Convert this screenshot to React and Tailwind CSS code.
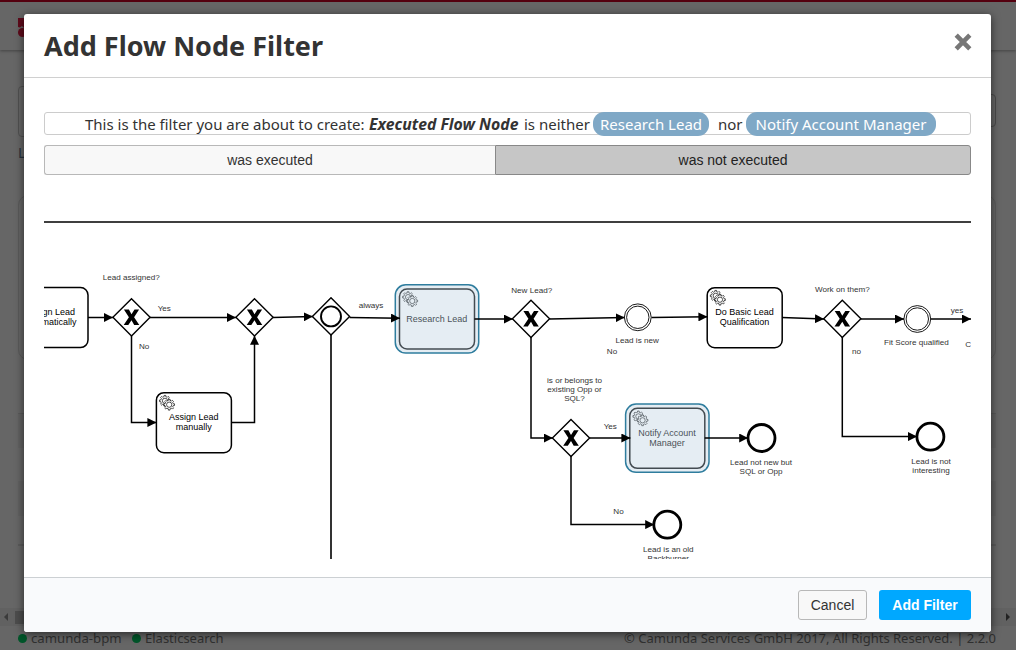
import React from "react";

const GEAR =
  "m 12,18 v -1.71335 c 0.352326,-0.0705 0.703932,-0.17838 1.047628,-0.32133 0.344416,-0.14465 0.665822,-0.32133 0.966377,-0.52145 l 1.19431,1.18005 1.567487,-1.57688 -1.195028,-1.18014 c 0.403376,-0.61394 0.683079,-1.29908 0.825447,-2.01824 l 1.622133,-0.01 v -2.2196 l -1.636514,0.01 c -0.07333,-0.35153 -0.178319,-0.70024 -0.323564,-1.04372 -0.145244,-0.34406 -0.321407,-0.6644 -0.522735,-0.96217 l 1.131035,-1.13631 -1.583305,-1.56293 -1.129598,1.13589 c -0.614052,-0.40108 -1.302883,-0.68093 -2.022633,-0.82247 l 0.0093,-1.61852 h -2.241173 l 0.0042,1.63124 c -0.353763,0.0736 -0.705369,0.17977 -1.049785,0.32371 -0.344415,0.14437 -0.665102,0.32092 -0.9635006,0.52006 l -1.1698628,-1.15823 -1.5667691,1.5792 1.1684265,1.15669 c -0.4026573,0.61283 -0.68308,1.29797 -0.8247287,2.01713 l -1.6588041,0.003 v 2.22174 l 1.6724648,-0.006 c 0.073327,0.35077 0.1797598,0.70243 0.3242851,1.04472 0.1452428,0.34448 0.3214064,0.6644 0.5227339,0.96066 l -1.1993431,1.19723 1.5840256,1.56011 1.1964668,-1.19348 c 0.6140517,0.40346 1.3028827,0.68232 2.0233517,0.82331 l 7.19e-4,1.69892 h 2.226848 z";

function Gears({ x, y }) {
  return (
    <g transform={`translate(${x} ${y}) scale(0.75)`} fill="#fff" stroke="#000" strokeWidth="0.9">
      <path d={GEAR} />
      <circle cx="10.9" cy="10.8" r="3.5" />
      <g transform="translate(5.6 5.2)">
        <path d={GEAR} />
        <circle cx="10.9" cy="10.8" r="3.5" />
      </g>
    </g>
  );
}

function Task({ x, y, lines, selected, textY }) {
  return (
    <g>
      <g opacity={selected ? 0.75 : 1}>
        <rect x={x} y={y} width="75" height="60" rx="7.5" fill="#fff" stroke="#000" strokeWidth="1.5" />
        <Gears x={x + 0.4} y={y} />
        {lines.map((line, i) => (
          <text key={line} x={x + 37.3} y={textY + i * 10} textAnchor="middle" fontSize="9" fill="#000">
            {line}
          </text>
        ))}
      </g>
      {selected && (
        <rect x={x - 4.2} y={y - 4.2} width="83.4" height="68.2" rx="10.5" fill="#5b8fb5" fillOpacity="0.16" stroke="#2f7d9e" strokeWidth="1.5" />
      )}
    </g>
  );
}

function Gateway({ x, y, event }) {
  return (
    <g transform={`translate(${x} ${y})`}>
      <path d="M0-18.6 18.6 0 0 18.6-18.6 0Z" fill="#fff" stroke="#000" strokeWidth="1.4" />
      {event ? (
        <circle r="10" fill="none" stroke="#000" strokeWidth="1.9" />
      ) : (
        <path d="M-7.6-7.7h5L0-3 3-7.7H7.6L2.6 0 7.8 7.7H2.7L0 2.9-3.2 7.7H-7.8L-2.6 0Z" fill="#000" />
      )}
    </g>
  );
}

function IntermediateEvent({ x, y }) {
  return (
    <g fill="#fff" stroke="#000" strokeWidth="0.9">
      <circle cx={x} cy={y} r="13.4" />
      <circle cx={x} cy={y} r="11.2" />
    </g>
  );
}

function EndEvent({ x, y }) {
  return <circle cx={x} cy={y} r="13.5" fill="#fff" stroke="#000" strokeWidth="2.8" />;
}

const FLOWS = [
  "M88 317.5H112.9",
  "M150 317.5H235.9",
  "M131.5 336V422.5H156.4",
  "M231.5 422.5H254.5V335.8",
  "M273 317.5 312.8 316.6",
  "M349.6 317.4 400 318.2",
  "M474.5 319H512.8",
  "M549.5 319 624.6 317.6",
  "M651.5 317.4 707.4 316.8",
  "M782 317.6 824 319",
  "M861 319H904",
  "M930.8 319H971",
  "M842.3 337V436.6H917",
  "M531 337V438H552.8",
  "M589.6 438H630.4",
  "M704.7 438H748.2",
  "M571 456V524.6H654.2",
];

const LABELS = [
  [131.3, 279.6, "Lead assigned?"],
  [164.3, 311.2, "Yes"],
  [144.2, 349, "No"],
  [371, 308, "always"],
  [531.7, 293, "New Lead?"],
  [637.2, 343, "Lead is new"],
  [612, 354, "No"],
  [574.5, 383, "is or belongs to"],
  [574.5, 392, "existing Opp or"],
  [574.5, 401, "SQL?"],
  [610.3, 429, "Yes"],
  [761, 465, "Lead not new but"],
  [761, 474, "SQL or Opp"],
  [618.5, 514, "No"],
  [668.3, 552, "Lead is an old"],
  [668.3, 561, "Backburner"],
  [842.3, 292, "Work on them?"],
  [856.5, 354, "no"],
  [957, 313.4, "yes"],
  [916.5, 345.3, "Fit Score qualified"],
  [968.3, 347, "C"],
  [931, 464, "Lead is not"],
  [931, 473, "interesting"],
];

function Diagram() {
  return (
    <svg className="block h-[377px] w-[927px] font-['Liberation_Sans',sans-serif]" viewBox="44 182 927 377">
      <defs>
        <marker id="arrow" viewBox="0 0 9 9" refX="9" refY="4.5" markerWidth="9" markerHeight="9" markerUnits="userSpaceOnUse" orient="auto">
          <path d="M0 0 9 4.5 0 9Z" fill="#000" />
        </marker>
      </defs>
      <path d="M44 222H971" stroke="#3f3f3f" strokeWidth="2" />
      <path d="M331 335V559" stroke="#333" strokeWidth="2" />
      <Task x={13} y={287.6} lines={["Assign Lead", "automatically"]} textY={315} />
      <Gateway x={131.5} y={317.3} />
      <Gateway x={254.5} y={317.3} />
      <Gateway x={331} y={316.4} event />
      <Task x={156.4} y={392.7} lines={["Assign Lead", "manually"]} textY={420} />
      <Task x={399.5} y={289} lines={["Research Lead"]} textY={322} selected />
      <Gateway x={531} y={318.8} />
      <Gateway x={571} y={438} />
      <Gateway x={842.3} y={318.8} />
      <IntermediateEvent x={637.8} y={317.3} />
      <IntermediateEvent x={917.3} y={319} />
      <Task x={707.2} y={287.7} lines={["Do Basic Lead", "Qualification"]} textY={315} />
      <Task x={629.8} y={408.3} lines={["Notify Account", "Manager"]} textY={436} selected />
      <EndEvent x={761.5} y={438} />
      <EndEvent x={930.4} y={436.7} />
      <EndEvent x={667.3} y={524.7} />
      <g fill="none" stroke="#000" strokeWidth="1.5">
        {FLOWS.map((d) => (
          <path key={d} d={d} markerEnd="url(#arrow)" />
        ))}
      </g>
      {LABELS.map(([x, y, label]) => (
        <text key={`${x}-${y}`} x={x} y={y} textAnchor="middle" fontSize="8.1" fill="#333">
          {label}
        </text>
      ))}
    </svg>
  );
}

function Pill({ children, className }) {
  return (
    <span className={`flex h-6 items-center justify-center rounded-[11px] bg-[#7fa8c6] pt-px text-white ${className}`}>
      {children}
    </span>
  );
}

function Backdrop() {
  return (
    <div className="flex h-[650px] w-full flex-col bg-[#666] text-[#303030]">
      <header className="flex h-[50px] shrink-0 border-t-2 border-[#54000f] px-[18px] pt-4 shadow-[0_1px_3px_rgba(0,0,0,0.35)]">
        <svg className="h-[19px] w-[19px]" viewBox="0 0 19 19">
          <path d="M0 0H19V9L6 10 4 8 2 9.5 0 9Z" fill="#600a1b" />
          <circle cx="4.5" cy="14.5" r="4.5" fill="#600a1b" />
        </svg>
      </header>
      <div className="flex justify-between pr-5 pl-[18px] pt-9">
        <div className="h-[51px] w-60 rounded border border-[#515151]" />
        <div className="mt-2 h-[33px] w-40 rounded border border-[#4a4a4a]" />
      </div>
      <div className="mt-[6px] h-5 pl-[18px] text-sm text-[#26323e]">Last modified</div>
      <div className="mr-5 ml-[18px] mt-[32px] h-[165px] shrink-0 rounded-[10px] border border-[#5a5a5a]" />
      <div className="mr-5 ml-[18px] mt-[53px] h-[35px] border-t border-[#5a5a5a] bg-[#626262]" />
      <div className="mr-5 ml-[18px] mt-[33px] h-[35px] bg-[#626262]" />
      <div className="mr-5 ml-[18px] mt-7 h-0.5 bg-[#5b5b5b]" />
      <div className="mt-auto flex h-[18px] shrink-0 items-center justify-between bg-[#616161] pr-1.5 pl-1">
        <div className="flex items-center gap-[7px]">
          <svg className="h-2 w-1" viewBox="0 0 4 8"><path d="M4 0V8L0 4Z" fill="#3b3b3b" /></svg>
          <div className="h-[13px] w-40 bg-[#4d4d4d]" />
        </div>
        <svg className="h-2 w-1" viewBox="0 0 4 8"><path d="M0 0V8L4 4Z" fill="#222" /></svg>
      </div>
      <footer className="flex h-6 shrink-0 items-center justify-between px-[18px] pt-px pr-5 text-[13px]">
        <div className="flex items-center">
          <span className="mr-1 size-[9px] rounded-full bg-[#00562a]" />
          <span className="w-[92px] text-[13.2px] whitespace-nowrap">camunda-bpm</span>
          <span className="mr-1 ml-[9px] size-[9px] rounded-full bg-[#00562a]" />
          <span>Elasticsearch</span>
        </div>
        <span>© Camunda Services GmbH 2017, All Rights Reserved. | 2.2.0</span>
      </footer>
    </div>
  );
}

export default function App() {
  return (
    <div className="relative h-[650px] w-[1016px] overflow-hidden font-['Noto_Sans',sans-serif]">
      <Backdrop />
      <div className="absolute top-[14px] left-6 flex h-[618px] w-[967px] flex-col rounded-[3px] bg-white text-[#333] shadow-[0_2px_10px_rgba(0,0,0,0.6)]">
        <div className="flex h-16 shrink-0 items-center justify-between border-b border-[#d0d0d0] px-5">
          <h1 className="whitespace-nowrap text-[27px] leading-none font-bold">Add Flow Node Filter</h1>
          <svg className="mr-[-1px] mb-2 h-[18px] w-[18px]" viewBox="0 0 18 18">
            <path d="M2.2 2.2 15.8 15.8M15.8 2.2 2.2 15.8" stroke="#777" strokeWidth="4.6" />
          </svg>
        </div>
        <div className="flex grow flex-col px-5 pt-[34px]">
          <div className="flex h-[23px] shrink-0 items-center justify-between rounded-[3px] border border-[#ccc] pr-[34px] pl-10 text-[15px] whitespace-nowrap">
            <span className="w-[284px] pt-px">This is the filter you are about to create:</span>
            <b className="w-[155px] pt-[3px] text-[15.8px] italic">Executed Flow Node</b>
            <span className="w-[69px] pt-px">is neither</span>
            <Pill className="w-[116px]">Research Lead</Pill>
            <span className="ml-[9px] w-[28px] pt-px">nor</span>
            <Pill className="w-[190px]">Notify Account Manager</Pill>
          </div>
          <div className="mt-[10px] flex h-[30px] shrink-0 font-['Liberation_Sans',sans-serif] text-[14px]">
            <button className="w-[451px] rounded-l-[3px] border border-r-0 border-[#b8b8b8] bg-[#f8f8f8] pt-px">was executed</button>
            <button className="grow rounded-r-[3px] border border-[#888] bg-[#c6c6c6] pt-px text-[#222]">was not executed</button>
          </div>
          <div className="mt-[7px]">
            <Diagram />
          </div>
        </div>
        <div className="flex h-[55px] shrink-0 items-center justify-end gap-3 rounded-b-[3px] border-t border-[#ccd0d3] bg-[#f9fafc] px-5 font-['Liberation_Sans',sans-serif] text-[14px]">
          <button className="h-[30px] w-[69px] rounded-[3px] border border-[#b8b8b8] bg-[#f8f8f8] pt-px">Cancel</button>
          <button className="h-[30px] w-[92px] rounded-[3px] bg-[#00a8ff] pt-px font-bold text-white">Add Filter</button>
        </div>
      </div>
    </div>
  );
}
